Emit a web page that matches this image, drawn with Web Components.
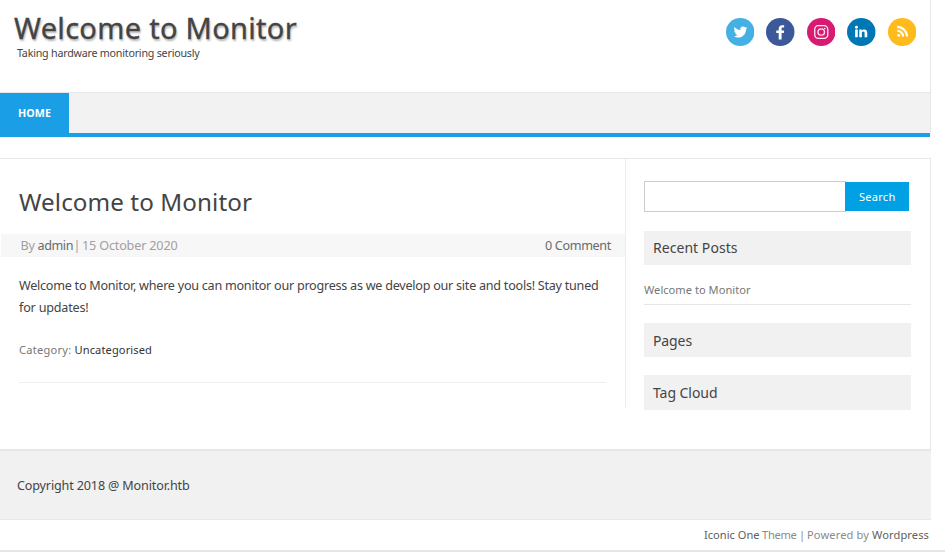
<!DOCTYPE html>
<html lang="en">
<head>
<meta charset="utf-8">
<title>Welcome to Monitor</title>
<style>
body{margin:0;background:#fff;color:#444;font-family:"Noto Sans","Open Sans",sans-serif;overflow:hidden}
</style>
</head>
<body>
<monitor-page></monitor-page>
<script>
const define = (name, html, Base = HTMLElement) => {
  const template = document.createElement('template');
  template.innerHTML = html;
  customElements.define(name, class extends Base {
    constructor() {
      super();
      this.attachShadow({mode: 'open'}).append(template.content.cloneNode(true));
    }
  });
};

// A single line of text, tracked so that it spans the measure given in "w".
class TrackedText extends HTMLElement {
  connectedCallback() {
    if (this.shadowRoot) return;
    this.attachShadow({mode: 'open'}).innerHTML =
      '<style>:host{display:block;white-space:nowrap}span{display:inline-block;white-space:pre}</style><span></span>';
    const span = this.shadowRoot.querySelector('span');
    span.textContent = this.getAttribute('text');
    const w = parseFloat(this.getAttribute('w'));
    const natural = span.getBoundingClientRect().width;
    span.style.letterSpacing = ((w - natural) / span.textContent.length).toFixed(4) + 'px';
  }
}
customElements.define('tracked-text', TrackedText);

const glyphs = {
  twitter: ['#45b0e3', '<path fill="#fff" d="M20.8 9.8c-.5.2-1 .4-1.500.4.500-.3 1-.8 1.200-1.500-.5.300-1.100.500-1.700.7a2.800 2.800 0 0 0-4.800 2.500c-2.300-.1-4.300-1.200-5.600-2.900-.8 1.400-.4 2.900.8 3.700-.4 0-.8-.1-1.200-.3 0 1.400.9 2.400 2.200 2.700-.4.1-.8.1-1.200 0 .3 1.100 1.300 1.900 2.600 2-1.200.9-2.500 1.300-4 1.100 5.700 3.500 12-.1 12-6.700.500-.5.900-1 1.200-1.700z"/>'],
  facebook: ['#3b5998', '<path fill="#fff" d="M12.500 21.500v-6.400h-2.400v-2.700h2.400v-1.700c0-2.300 1.300-3.500 3.400-3.500.9 0 1.700.1 1.900.1v2.300h-1.300c-1 0-1.200.5-1.200 1.200v1.600h2.500l-.3 2.700h-2.200v6.400z"/>'],
  instagram: ['#d91a72', '<g fill="none" stroke="#fff" stroke-opacity=".9" stroke-width="1.300"><rect x="7.600" y="7.600" width="12.800" height="12.800" rx="3.600"/><circle cx="14" cy="14" r="3.200"/></g><circle cx="17.500" cy="10.500" r=".8" fill="#fff"/>'],
  linkedin: ['#0077b5', '<g fill="#fff"><circle cx="9.300" cy="9.200" r="1.450"/><path d="M8 11.600h2.600v7.600H8zM12.100 11.600h2.400v1.100c.5-.8 1.300-1.300 2.500-1.300 2.300 0 2.900 1.500 2.900 3.600v4.200h-2.600v-3.800c0-1-.2-1.900-1.300-1.900s-1.400.8-1.400 1.900v3.800h-2.600z"/></g>'],
  rss: ['#ffba1c', '<g fill="none" stroke="#fff" stroke-width="2.100"><path d="M9 12.700a5.900 5.900 0 0 1 5.900 5.900M9 8.900a9.700 9.700 0 0 1 9.700 9.700"/></g><circle cx="10.500" cy="17.200" r="1.500" fill="#fff"/>']
};
customElements.define('social-icon', class extends HTMLElement {
  connectedCallback() {
    if (this.shadowRoot) return;
    const [fill, art] = glyphs[this.getAttribute('kind')];
    this.attachShadow({mode: 'open'}).innerHTML =
      `<style>:host{display:block;width:28.500px;height:28px}svg{display:block;width:100%;height:100%}</style>
       <svg viewBox="0 0 28 28" preserveAspectRatio="none"><circle cx="14" cy="14" r="14" fill="${fill}"/>${art}</svg>`;
  }
});

define('site-header', `<style>
:host{display:flex;justify-content:space-between;box-sizing:border-box;height:92px;padding:9px 14px 0 14px;border-right:1px solid #e7e7e7}
.title{font-size:29px;line-height:37px;text-shadow:1px 2px 2px rgba(110,110,110,.5);-webkit-text-stroke:.3px #444}
.tag{font-size:10.700px;line-height:15px;padding-left:3px}
nav{display:flex;gap:12px;padding-top:9px}
</style>
<div><tracked-text class="title" text="Welcome to Monitor" w="283"></tracked-text>
<tracked-text class="tag" text="Taking hardware monitoring seriously" w="182.500"></tracked-text></div>
<nav><social-icon kind="twitter"></social-icon><social-icon kind="facebook"></social-icon><social-icon kind="instagram"></social-icon><social-icon kind="linkedin"></social-icon><social-icon kind="rss"></social-icon></nav>`);

define('site-nav', `<style>
:host{display:flex;box-sizing:border-box;width:930px;height:45px;background:#f2f2f2;border-top:1px solid #e7e7e7;border-bottom:4px solid #1a9fe6;box-shadow:1px -4px 0 #e7e7e7;clip-path:inset(0 -1px 0 0)}
a{box-sizing:border-box;width:69px;padding-left:18px;background:#1a9fe6;color:#fff;font-weight:700;font-size:10.700px;line-height:40px}
</style><a><tracked-text text="HOME" w="33"></tracked-text></a>`);

define('blog-post', `<style>
:host{display:block;box-sizing:border-box;width:626px;height:249px;border-right:1px solid #ececec;padding-top:23px}
.h{font-size:24.200px;line-height:40px;padding-left:19px}
.meta{display:flex;justify-content:space-between;height:23px;margin:12px 0 0 1px;padding:0 14px 0 19.500px;background:#f7f7f7;font-size:12.600px;line-height:23px;color:#a0a0a0}
.by{display:flex}
.bar{margin:0 2.500px 0 .500px}
.link{color:#6a6a6a}
.body{font-size:12.600px;line-height:22px;padding:18px 0 0 19px}
.cat{display:flex;font-size:11.100px;line-height:18px;padding:22px 0 0 19px;color:#777}
.cat .link{color:#333}
hr{margin:23px 19px 0;border:0;height:1px;background:#efefef}
</style>
<tracked-text class="h" text="Welcome to Monitor" w="233"></tracked-text>
<div class="meta"><div class="by"><tracked-text text="By " w="17"></tracked-text><tracked-text class="link" text="admin" w="35.500"></tracked-text><tracked-text class="bar" text="|" w="6"></tracked-text><tracked-text text="15 October 2020" w="95.500"></tracked-text></div><tracked-text class="link" text="0 Comment" w="66"></tracked-text></div>
<div class="body"><tracked-text text="Welcome to Monitor, where you can monitor our progress as we develop our site and tools! Stay tuned" w="579.500"></tracked-text><tracked-text text="for updates!" w="69.500"></tracked-text></div>
<div class="cat"><tracked-text text="Category: " w="55.500"></tracked-text><tracked-text class="link" text="Uncategorised" w="77.500"></tracked-text></div>
<hr>`);

define('search-box', `<style>
:host{display:flex;align-items:center;height:31px}
input{box-sizing:border-box;width:202px;height:31px;border:1px solid #ccc;margin:0;padding:0;background:#fff}
button{all:unset;box-sizing:border-box;width:64px;height:29px;margin-left:-1px;padding-left:14px;background:#00a1e4;color:#fff;font-size:11.100px;line-height:29px}
</style><input type="text" aria-label="Search"><button><tracked-text text="Search" w="36.500"></tracked-text></button>`);

define('side-widget', `<style>
:host{display:block}
.t{background:#f1f1f1;height:var(--bar,34px);line-height:var(--line,34px);font-size:14px;padding-left:9px}
</style><div class="t"><slot name="title"></slot></div><slot></slot>`);

define('side-bar', `<style>
:host{display:flex;flex-direction:column;box-sizing:border-box;width:286px;padding:22px 0 0 18px}
side-widget{width:267px;margin-top:18px}
side-widget.first{margin-top:19px}
.low{--line:36px}
.tall{--bar:35px}
.item{height:39px;border-bottom:1px solid #e7e7e7;font-size:11.100px;line-height:50px;color:#777}
</style>
<search-box></search-box>
<side-widget class="first"><tracked-text slot="title" text="Recent Posts" w="84.500"></tracked-text><div class="item"><tracked-text text="Welcome to Monitor" w="106.500"></tracked-text></div></side-widget>
<side-widget class="low"><tracked-text slot="title" text="Pages" w="39"></tracked-text></side-widget>
<side-widget class="low tall"><tracked-text slot="title" text="Tag Cloud" w="64.500"></tracked-text></side-widget>`);

define('site-main', `<style>
:host{display:flex;box-sizing:border-box;height:291px;margin-top:21px;border-top:1px solid #e7e7e7;border-right:1px solid #e7e7e7}
</style><blog-post></blog-post><side-bar></side-bar>`);

define('site-footer', `<style>
:host{display:block}
.copy{box-sizing:border-box;height:71px;background:#f1f1f1;border-top:2px solid #e7e7e7;border-bottom:1px solid #e7e7e7;padding-left:17px;font-size:12.600px;line-height:69px}
.credit{display:flex;justify-content:flex-end;height:30px;padding-right:2px;line-height:29.500px;font-size:11.100px;color:#8a8a8a}
.link{color:#606060}
</style>
<div class="copy"><tracked-text text="Copyright 2018 @ Monitor.htb" w="172.500"></tracked-text></div>
<div class="credit"><tracked-text class="link" text="Iconic One" w="55.500"></tracked-text><tracked-text text=" Theme " w="39.500"></tracked-text><tracked-text text="| " w="8"></tracked-text><tracked-text text="Powered by " w="65"></tracked-text><tracked-text class="link" text="Wordpress" w="57"></tracked-text></div>`);

define('monitor-page', `<style>
:host{display:block}
.wrap{width:931px}
.edge{height:2px;background:#e5e5e5}
</style>
<div class="wrap"><site-header></site-header><site-nav></site-nav><site-main></site-main><site-footer></site-footer></div><div class="edge"></div>`);
</script>
</body>
</html>
